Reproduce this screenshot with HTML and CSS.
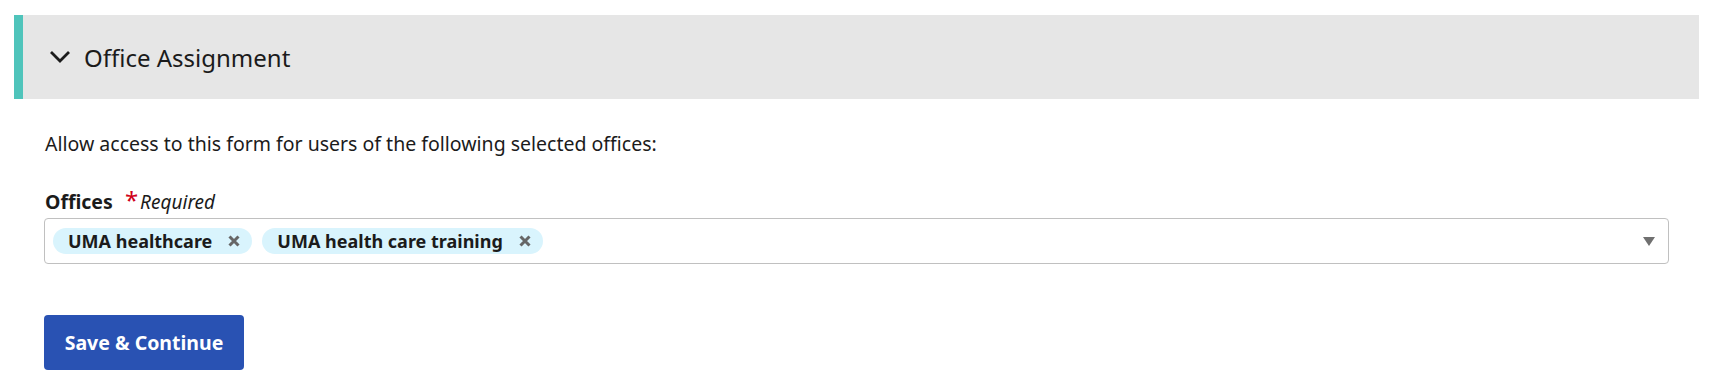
FILE: index.html
```html
<!DOCTYPE html>
<html lang="en">

<head>
  <meta charset="UTF-8">
  <meta name="viewport" content="width=device-width, initial-scale=1.0">
  <title>Office Assignment</title>
  <link rel="stylesheet" href="styles.css">
</head>

<body>
  <section class="panel">
    <div class="panel-header">
      <svg class="chevron" width="22" height="14" viewBox="0 0 22 14">
        <path d="M2 2 L11 11 L20 2" fill="none" stroke="#1b1b1b" stroke-width="2.8" />
      </svg>
      <h2 class="panel-title">Office Assignment</h2>
    </div>

    <div class="panel-body">
      <p class="intro">Allow access to this form for users of the following selected offices:</p>

      <div class="field">
        <label class="field-label">Offices <span class="req"><span class="star">*</span>Required</span></label>
        <div class="multi-select">
          <div class="chips">
            <span class="chip">UMA healthcare
              <svg class="chip-x" width="12" height="12" viewBox="0 0 12 12">
                <path d="M1.5 1.5 L10.5 10.5 M10.5 1.5 L1.5 10.5" stroke="#666666" stroke-width="3" />
              </svg>
            </span>
            <span class="chip">UMA health care training
              <svg class="chip-x" width="12" height="12" viewBox="0 0 12 12">
                <path d="M1.5 1.5 L10.5 10.5 M10.5 1.5 L1.5 10.5" stroke="#666666" stroke-width="3" />
              </svg>
            </span>
          </div>
          <span class="caret"></span>
        </div>
      </div>

      <button type="button" class="btn-primary">Save &amp; Continue</button>
    </div>
  </section>
</body>

</html>
```

FILE: styles.css
```css
body {
  margin: 0;
  background: #ffffff;
  font-family: "Noto Sans", "Open Sans", sans-serif;
  color: #1b1b1b;
}

.panel {
  padding: 15px 14px 0 14px;
}

.panel-header {
  display: flex;
  align-items: center;
  height: 84px;
  background: #e6e6e6;
  border-left: 9px solid #4fc4bb;
  padding-left: 26px;
}

.chevron {
  margin-right: 13px;
}

.panel-title {
  margin: 0;
  font-size: 24px;
  font-weight: 400;
}

.panel-body {
  padding: 32px 30px 0 30px;
}

.intro {
  margin: 0 0 30px 1px;
  font-size: 19.5px;
  line-height: 26px;
}

.field-label {
  display: block;
  font-size: 19.5px;
  line-height: 26px;
  font-weight: 700;
  margin-left: 1px;
  margin-bottom: 3px;
}

.req {
  font-weight: 400;
  font-style: italic;
  font-size: 19px;
  margin-left: 7px;
}

.star {
  color: #d0021b;
  font-style: normal;
  font-size: 24px;
  margin-right: 2px;
}

.multi-select {
  display: flex;
  align-items: center;
  height: 44px;
  border: 1px solid #c0c0c0;
  border-radius: 4px;
  padding: 0 13px 0 8px;
}

.chips {
  flex: 1;
  display: flex;
  gap: 10px;
}

.chip {
  display: inline-flex;
  align-items: center;
  height: 26px;
  background: #d9f4fd;
  border-radius: 13px;
  padding: 0 12px 0 15px;
  font-size: 18px;
  font-weight: 700;
}

.chip-x {
  margin-left: 16px;
}

.caret {
  width: 0;
  height: 0;
  border-left: 6px solid transparent;
  border-right: 6px solid transparent;
  border-top: 9px solid #707070;
}

.btn-primary {
  margin-top: 51px;
  width: 200px;
  height: 55px;
  background: #2952b3;
  color: #ffffff;
  border: none;
  border-radius: 4px;
  font-family: inherit;
  font-size: 19.5px;
  font-weight: 700;
  cursor: pointer;
}
```
